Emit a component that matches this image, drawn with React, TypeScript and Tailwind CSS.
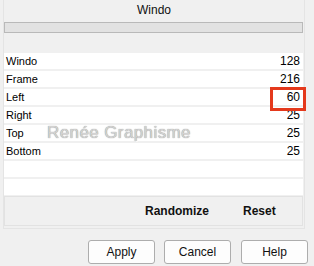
import React from 'react';

const rows: { label: string; value: string }[] = [
  { label: 'Windo', value: '128' },
  { label: 'Frame', value: '216' },
  { label: 'Left', value: '60' },
  { label: 'Right', value: '25' },
  { label: 'Top', value: '25' },
  { label: 'Bottom', value: '25' },
  { label: '', value: '' },
  { label: '', value: '' },
];

function DialogButton({ label, className }: { label: string; className?: string }): JSX.Element {
  return (
    <button
      className={`h-[24px] w-[67px] rounded-[3px] border border-[#adadad] bg-[#fdfdfd] text-[12px] text-[#111] ${className ?? ''}`}
    >
      {label}
    </button>
  );
}

export default function App(): JSX.Element {
  return (
    <div
      className="relative h-[266px] w-[314px] overflow-hidden bg-[#f0f0f0] text-[11px] text-black"
      style={{ fontFamily: '"Liberation Sans", Arial, sans-serif' }}
    >
      <div className="ml-[3px] h-[229px] w-[302px] border-x border-b border-[#e4e4e4]">
        <div className="flex h-[22px] items-center justify-center pb-[3px] text-[12px] text-[#111]">Windo</div>
        <div className="h-[11px] w-[299px] border border-[#b9b9b9] bg-[#e2e2e2]" />
        <div className="h-[20px]" />
        <div className="flex flex-col gap-[2px]">
          {rows.map((r, i) => (
            <div key={`row-${i}`} className="flex h-[16px] w-[299px] items-center justify-between bg-white pl-[2px] pr-[3px]">
              <span>{r.label}</span>
              <span className="text-[12px]">{r.value}</span>
            </div>
          ))}
        </div>
        <div className="mt-[1px] flex h-[30px] w-[299px] items-center border border-[#e2e2e2] bg-[#f0f0f0] text-[12px] font-bold text-[#111]">
          <span className="ml-[140px]">Randomize</span>
          <span className="ml-[34px]">Reset</span>
        </div>
      </div>

      <div className="mt-[11px] flex">
        <DialogButton label="Apply" className="ml-[88px]" />
        <DialogButton label="Cancel" className="ml-[9px]" />
        <DialogButton label="Help" className="ml-[10px]" />
      </div>

      {/* watermark */}
      <div
        className="absolute left-[47px] top-[120px] text-[17px] tracking-[0.4px] text-[#d2d2d2]"
        style={{ textShadow: '0 0 1px #7d7d7d, 1px 1px 0 #ffffff' }}
      >
        Renée Graphisme
      </div>

      {/* highlight box */}
      <div className="absolute left-[270px] top-[87px] h-[24px] w-[36px] border-[3px] border-[#e4391c]" />
    </div>
  );
}
